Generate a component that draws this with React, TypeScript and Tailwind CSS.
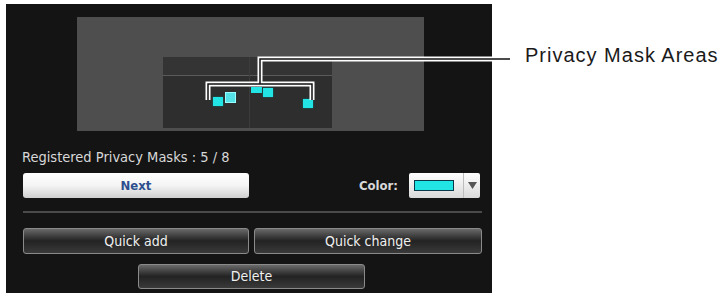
import React from "react";

const panelFont = { fontFamily: '"DejaVu Sans Condensed", "Liberation Sans", sans-serif' };

function DarkButton({ label, className }: { label: string; className: string }) {
  return (
    <button
      className={`rounded-[3px] border border-[#8a8a8a] bg-gradient-to-b from-[#6a6a6a] via-[#232323] to-[#3a3a3a] text-[14px] text-[#f0f0f0] flex items-center justify-center ${className}`}
      style={panelFont}
    >
      {label}
    </button>
  );
}

export default function App() {
  const squares = [
    { l: 50, t: 40, w: 10, h: 9, c: "bg-[#22e4e4] shadow-[0_0_2px_#0a6a6a]" },
    { l: 62, t: 35, w: 11, h: 11, c: "bg-[#55e2e6] border border-[#9ff]" },
    { l: 88, t: 30, w: 11, h: 6, c: "bg-[#22e4e4]" },
    { l: 100, t: 31, w: 10, h: 9, c: "bg-[#22e4e4] shadow-[0_0_2px_#0a6a6a]" },
    { l: 140, t: 42, w: 10, h: 9, c: "bg-[#22e4e4] shadow-[0_0_2px_#0a6a6a]" },
  ];
  return (
    <div className="relative w-[723px] h-[296px] bg-white flex overflow-hidden">
      <div className="ml-[6px] mt-[4px] w-[486px] h-[289px] bg-[#141414] flex flex-col">
        <div className="mt-[13px] ml-[71px] w-[347px] h-[114px] bg-[#4e4e4e] pl-[86px] pt-[40px]">
          <div className="relative w-[169px] h-[71px] bg-[#2e2e2e] flex">
            <div className="w-[87px] h-full border-r border-[#3c3c3c] flex flex-col">
              <div className="h-[19px] bg-[#343434] border-b border-[#5a5a5a]" />
            </div>
            <div className="flex-1 h-full flex flex-col">
              <div className="h-[19px] bg-[#343434] border-b border-[#5a5a5a]" />
            </div>
            {squares.map((s, i) => (
              <div
                key={i}
                className={`absolute ${s.c}`}
                style={{ left: s.l, top: s.t, width: s.w, height: s.h }}
              />
            ))}
          </div>
        </div>
        <div className="mt-[18px] ml-[16px] text-[14.5px] leading-[16px] text-[#d8d8d8]" style={panelFont}>
          Registered Privacy Masks : 5 / 8
        </div>
        <div className="mt-[8px] ml-[17px] mr-[12px] flex items-center">
          <button
            className="w-[226px] h-[25px] rounded-[3px] bg-gradient-to-b from-white via-[#f4f4f4] to-[#cfcfcf] text-[13px] font-bold text-[#2d4f8e] flex items-center justify-center"
            style={panelFont}
          >
            Next
          </button>
          <div className="flex-1" />
          <span className="text-[13px] font-bold text-[#d8d8d8] mr-[11px]" style={panelFont}>
            Color:
          </span>
          <div className="w-[71px] h-[25px] rounded-[2px] bg-gradient-to-b from-white to-[#d9d9d9] flex items-center">
            <div className="ml-[5px] w-[40px] h-[11px] bg-[#22e4e4] border border-[#0a3a4a]" />
            <div className="ml-[9px] h-full border-l border-[#bdbdbd] flex-1 flex items-center justify-center">
              <svg width="9" height="7" viewBox="0 0 9 7">
                <path d="M0 0 H9 L4.5 7 Z" fill="#555" />
              </svg>
            </div>
          </div>
        </div>
        <div className="mt-[13px] ml-[17px] mr-[10px] h-[2px] bg-[#4a4a4a]" />
        <div className="mt-[15px] ml-[17px] mr-[10px] flex gap-[5px]">
          <DarkButton label="Quick add" className="w-[226px] h-[26px]" />
          <DarkButton label="Quick change" className="w-[228px] h-[26px]" />
        </div>
        <div className="mt-[10px] flex">
          <DarkButton label="Delete" className="ml-[132px] w-[227px] h-[25px]" />
        </div>
      </div>
      <div
        className="ml-[33px] mt-[43px] text-[20px] leading-[24px] text-[#1a1a1a] tracking-[1px]"
        style={{ fontFamily: '"Liberation Sans", Arial, sans-serif' }}
      >
        Privacy Mask Areas
      </div>
      <svg className="absolute left-0 top-0 pointer-events-none" width="723" height="296">
        <path d="M260 84 H208 V100 M260 84 H312 V100 M260 84 V59 H492" fill="none" stroke="white" strokeWidth="5" />
        <path d="M260 84 H208 V100 M260 84 H312 V100 M260 84 V59 H510" fill="none" stroke="#111" strokeWidth="1.5" />
      </svg>
    </div>
  );
}
